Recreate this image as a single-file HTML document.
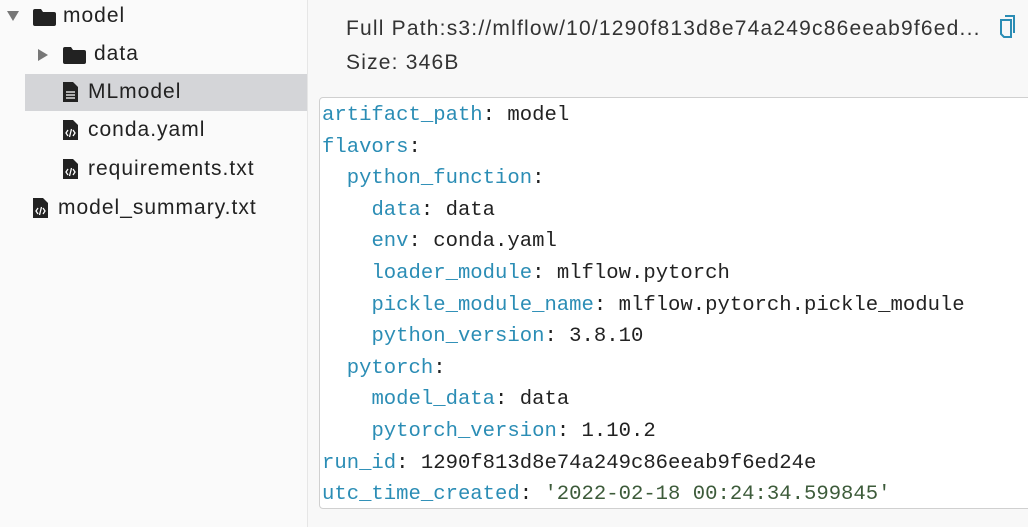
<!DOCTYPE html>
<html><head><style>
body{margin:0;width:1028px;height:527px;overflow:hidden;background:#f8f8f8;font-family:"Liberation Sans",sans-serif;position:relative}
.left{position:absolute;left:0;top:0;width:307px;height:527px;background:#fafafa;border-right:1px solid #e6e6e6}
.row{position:absolute;height:38px;line-height:36px;font-size:21px;letter-spacing:1px;color:#222}
.sel{position:absolute;left:25px;top:74px;width:282px;height:37px;background:#d4d5d8}
.ico{position:absolute}
.r{position:absolute;font-size:21px;letter-spacing:1.2px;color:#333}
.box{position:absolute;left:319px;top:97px;width:720px;height:410px;background:#fff;border:1px solid #d0d0d0;border-radius:4px}
pre{margin:0;position:absolute;left:322px;top:100px;font-family:"Liberation Mono",monospace;font-size:20.6px;line-height:31.6px;color:#222}
.k{color:#2b8db5}
.s{color:#3d5b3a}
</style></head><body>
<div class="left">
<div class="sel"></div>
<svg class="ico" style="left:7px;top:11px" width="12" height="10"><path d="M0 0H12L6 10Z" fill="#777"/></svg>
<svg class="ico" style="left:33px;top:9px" width="23" height="17"><path d="M0 2a2 2 0 0 1 2-2h6l2 3h11a2 2 0 0 1 2 2v10a2 2 0 0 1-2 2H2a2 2 0 0 1-2-2z" fill="#222"/></svg>
<div class="row" style="left:63px;top:-2px">model</div>
<svg class="ico" style="left:38px;top:49px" width="10" height="12"><path d="M0 0L10 6L0 12Z" fill="#777"/></svg>
<svg class="ico" style="left:63px;top:47px" width="23" height="17"><path d="M0 2a2 2 0 0 1 2-2h6l2 3h11a2 2 0 0 1 2 2v10a2 2 0 0 1-2 2H2a2 2 0 0 1-2-2z" fill="#222"/></svg>
<div class="row" style="left:94px;top:36px">data</div>
<svg class="ico" style="left:63px;top:82px" width="15" height="20"><path d="M0 0h10l5 5v15H0z" fill="#222"/><path d="M3 10h9M3 13h9M3 16h9" stroke="#ddd" stroke-width="1.5"/></svg>
<div class="row" style="left:88px;top:74px">MLmodel</div>
<svg class="ico" style="left:63px;top:120px" width="15" height="20"><path d="M0 0h10l5 5v15H0z" fill="#222"/><path d="M5 10l-2 3 2 3M10 10l2 3-2 3M8.5 9l-2 8" stroke="#fff" stroke-width="1.3" fill="none"/></svg>
<div class="row" style="left:88px;top:112px">conda.yaml</div>
<svg class="ico" style="left:63px;top:159px" width="15" height="20"><path d="M0 0h10l5 5v15H0z" fill="#222"/><path d="M5 10l-2 3 2 3M10 10l2 3-2 3M8.5 9l-2 8" stroke="#fff" stroke-width="1.3" fill="none"/></svg>
<div class="row" style="left:88px;top:151px">requirements.txt</div>
<svg class="ico" style="left:33px;top:198px" width="15" height="20"><path d="M0 0h10l5 5v15H0z" fill="#222"/><path d="M5 10l-2 3 2 3M10 10l2 3-2 3M8.5 9l-2 8" stroke="#fff" stroke-width="1.3" fill="none"/></svg>
<div class="row" style="left:58px;top:190px">model_summary.txt</div>
</div>
<div class="r" style="left:346px;top:17px">Full Path:s3://mlflow/10/1290f813d8e74a249c86eeab9f6ed...</div>
<svg class="ico" style="left:999px;top:15px" width="18" height="24"><path d="M6 1h9v17" fill="none" stroke="#2b8db5" stroke-width="2"/><path d="M2 5h10v17H5l-3-3z" fill="none" stroke="#2b8db5" stroke-width="2"/></svg>
<div class="r" style="left:346px;top:51px">Size: 346B</div>
<div class="box"></div>
<pre><span class="k">artifact_path</span>: model
<span class="k">flavors</span>:
  <span class="k">python_function</span>:
    <span class="k">data</span>: data
    <span class="k">env</span>: conda.yaml
    <span class="k">loader_module</span>: mlflow.pytorch
    <span class="k">pickle_module_name</span>: mlflow.pytorch.pickle_module
    <span class="k">python_version</span>: 3.8.10
  <span class="k">pytorch</span>:
    <span class="k">model_data</span>: data
    <span class="k">pytorch_version</span>: 1.10.2
<span class="k">run_id</span>: 1290f813d8e74a249c86eeab9f6ed24e
<span class="k">utc_time_created</span>: <span class="s">'2022-02-18 00:24:34.599845'</span></pre>
</body></html>
